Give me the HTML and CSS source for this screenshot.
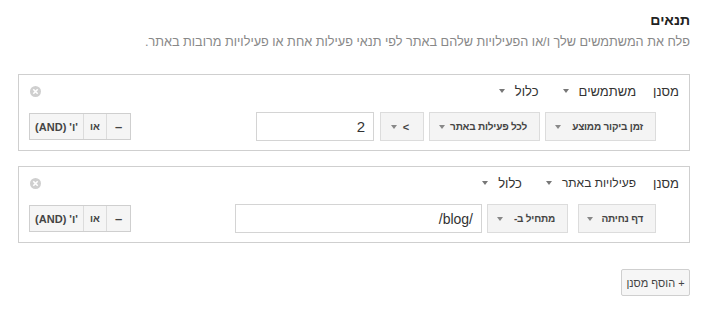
FILE: index.html
```html
<!DOCTYPE html>
<html lang="he" dir="rtl">
<head>
<meta charset="utf-8">
<link rel="stylesheet" href="styles.css">
</head>
<body>
<div class="page">
  <h1 class="title">תנאים</h1>
  <p class="subtitle">פלח את המשתמשים שלך ו/או הפעילויות שלהם באתר לפי תנאי פעילות אחת או פעילויות מרובות באתר.</p>

  <div class="panel">
    <div class="row-head">
      <span class="label">מסנן</span>
      <span class="drop">משתמשים <span class="caret"></span></span>
      <span class="drop">כלול <span class="caret"></span></span>
      <span class="close"><svg width="11" height="11" viewBox="0 0 11 11"><circle cx="5.5" cy="5.5" r="5.5" fill="#cfcfcf"/><path d="M3.3 3.3 L7.7 7.7 M7.7 3.3 L3.3 7.7" stroke="#fff" stroke-width="1.6"/></svg></span>
    </div>
    <div class="row-body">
      <div class="btn w111">זמן ביקור ממוצע <span class="caret"></span></div>
      <div class="btn w111">לכל פעילות באתר <span class="caret"></span></div>
      <div class="btn w44 gap6">&gt; <span class="caret"></span></div>
      <div class="input w118">2</div>
      <div class="logic">
        <span class="lbtn lminus">–</span>
        <span class="lbtn lor">או</span>
        <span class="lbtn land">'ו' (AND)</span>
      </div>
    </div>
  </div>

  <div class="panel panel2">
    <div class="row-head">
      <span class="label">מסנן</span>
      <span class="drop narrow">פעילויות באתר <span class="caret"></span></span>
      <span class="drop">כלול <span class="caret"></span></span>
      <span class="close"><svg width="11" height="11" viewBox="0 0 11 11"><circle cx="5.5" cy="5.5" r="5.5" fill="#cfcfcf"/><path d="M3.3 3.3 L7.7 7.7 M7.7 3.3 L3.3 7.7" stroke="#fff" stroke-width="1.6"/></svg></span>
    </div>
    <div class="row-body">
      <div class="btn w78">דף נחיתה <span class="caret"></span></div>
      <div class="btn w81">מתחיל ב- <span class="caret"></span></div>
      <div class="input w247 gap6">/blog/</div>
      <div class="logic">
        <span class="lbtn lminus">–</span>
        <span class="lbtn lor">או</span>
        <span class="lbtn land">'ו' (AND)</span>
      </div>
    </div>
  </div>

  <div class="add-row">
    <div class="add-btn">+ הוסף מסנן</div>
  </div>
</div>
</body>
</html>
```

FILE: styles.css
```css
html, body {
  margin: 0;
  padding: 0;
  background: #fff;
}
body {
  font-family: "Liberation Sans", Arial, "DejaVu Sans", sans-serif;
  color: #333;
  width: 707px;
  height: 325px;
  overflow: hidden;
}
.page {
  padding: 11px 17px 0 17px;
}
.title {
  margin: 0;
  font-size: 14px;
  font-weight: bold;
  color: #222;
  line-height: 18px;
}
.subtitle {
  margin: 5px 0 0 0;
  font-size: 12.7px;
  color: #888;
  line-height: 16px;
  white-space: nowrap;
}
.panel {
  margin-top: 24px;
  border: 1px solid #cfcfcf;
  padding: 0 10px 9px 10px;
  width: 650px;
  margin-left: 1px;
}
.panel2 {
  margin-top: 15px;
}
.row-head {
  display: flex;
  align-items: center;
  height: 30px;
  margin-top: 1px;
  font-size: 13px;
  white-space: nowrap;
}
.label {
  color: #333;
  margin-left: 17px;
}
.drop {
  display: flex;
  align-items: center;
  color: #333;
  margin-left: 24px;
}
.drop.narrow {
  font-size: 12px;
}
.drop .caret {
  margin-right: 10px;
}
.caret {
  display: inline-block;
  width: 0;
  height: 0;
  border-left: 3.5px solid transparent;
  border-right: 3.5px solid transparent;
  border-top: 4px solid #777;
}
.close {
  margin-right: auto;
  display: flex;
  margin-left: 1px;
}
.row-body {
  display: flex;
  align-items: center;
  margin-top: 6px;
  padding-right: 23px;
}
.btn {
  box-sizing: border-box;
  height: 29px;
  background: #f4f4f4;
  border: 1px solid #dcdcdc;
  display: flex;
  align-items: center;
  justify-content: space-between;
  padding: 0 12px 0 9px;
  font-size: 10px;
  font-weight: bold;
  letter-spacing: -0.2px;
  color: #444;
  margin-left: 5px;
  white-space: nowrap;
}
.btn .caret {
  border-top-color: #888;
}
.w111 { width: 111px; }
.w44 { width: 44px; padding: 0 14px 0 10px; font-size: 11px; }
.w78 { width: 78px; margin-left: 10px; padding-left: 8px; }
.w81 { width: 81px; }
.gap6 { margin-left: 6px; }
.input {
  box-sizing: border-box;
  height: 29px;
  border: 1px solid #d4d4d4;
  background: #fff;
  display: flex;
  align-items: center;
  padding: 0 8px;
  font-size: 15px;
  color: #333;
}
.w118 { width: 118px; }
.w247 { width: 247px; font-size: 14px; }
.logic {
  margin-right: auto;
  display: flex;
  height: 25px;
  border: 1px solid #cfcfcf;
  background: #f5f5f5;
}
.lbtn {
  display: flex;
  align-items: center;
  justify-content: center;
  font-size: 11px;
  font-weight: bold;
  color: #444;
  box-sizing: border-box;
  white-space: nowrap;
}
.lminus { width: 23px; font-size: 13px; }
.lor { width: 24px; border-right: 1px solid #dcdcdc; border-left: 1px solid #dcdcdc; font-size: 10px; }
.land { width: 53px; }
.add-row {
  display: flex;
  margin-top: 26px;
}
.add-btn {
  box-sizing: border-box;
  height: 27px;
  width: 69px;
  border: 1px solid #cfcfcf;
  background: #f6f6f6;
  border-radius: 2px;
  display: flex;
  align-items: center;
  justify-content: center;
  font-size: 11px;
  color: #444;
  white-space: nowrap;
}
```
